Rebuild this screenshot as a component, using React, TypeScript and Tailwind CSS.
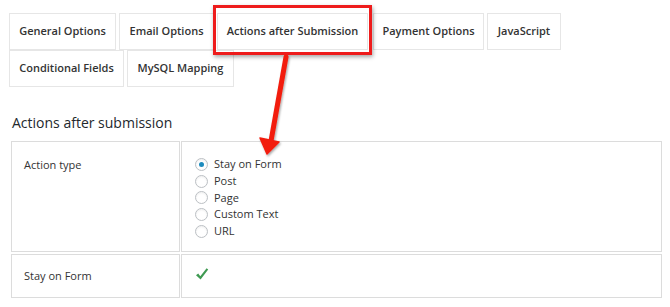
const tabsRow1 = [
  { label: 'General Options', w: 'w-[107px]' },
  { label: 'Email Options', w: 'w-[95px]' },
];

const radios = ['Stay on Form', 'Post', 'Page', 'Custom Text', 'URL'];

function Tab({ label, className = '' }: { label: string; className?: string }) {
  return (
    <div
      className={`h-[37px] flex items-center justify-center border border-[#e6e6e6] bg-white text-[11px] font-semibold text-[#333] ${className}`}
    >
      {label}
    </div>
  );
}

function Radio({ checked }: { checked?: boolean }) {
  return (
    <span className="w-[13px] h-[13px] rounded-full border border-[#bcc0c4] bg-white flex items-center justify-center shadow-[inset_0_1px_2px_rgba(0,0,0,0.07)]">
      {checked && <span className="w-[5px] h-[5px] rounded-full bg-[#1e8cbe]" />}
    </span>
  );
}

export default function App() {
  return (
    <div className="relative w-[670px] h-[307px] bg-white overflow-hidden font-['Open_Sans',sans-serif] text-[#333]">
      {/* Tabs */}
      <div className="pt-[13px] pl-[9px] w-[661px] flex flex-wrap">
        {tabsRow1.map((t) => (
          <Tab key={t.label} label={t.label} className={`${t.w} mr-[3px]`} />
        ))}
        <Tab label="Actions after Submission" className="w-[151px] mr-[5px] border-[#b3c9d6]" />
        <Tab label="Payment Options" className="w-[111px] mr-[3px]" />
        <Tab label="JavaScript" className="w-[74px]" />
        <div className="w-full flex">
          <Tab label="Conditional Fields" className="w-[115px] mr-[3px]" />
          <Tab label="MySQL Mapping" className="w-[107px]" />
        </div>
      </div>

      {/* Section heading */}
      <h2 className="mt-[26px] ml-[12px] text-[14px] leading-[20px] font-normal text-[#23282d]">
        Actions after submission
      </h2>

      {/* Settings table */}
      <div className="mt-[8px] ml-[11px] grid grid-cols-[169px_481px] gap-x-[1px] gap-y-[2px] text-[11px]">
        <div className="h-[111px] border border-[#dcdcdc] pl-[12px] pt-[14px] leading-[17px]">Action type</div>
        <div className="h-[111px] border border-[#dcdcdc] pl-[13px] pt-[14px]">
          {radios.map((r, i) => (
            <div key={r} className="flex items-center gap-[6px] h-[16.8px] leading-[16.8px]">
              <Radio checked={i === 0} />
              <span>{r}</span>
            </div>
          ))}
        </div>
        <div className="h-[44px] border border-[#dcdcdc] pl-[12px] flex items-center">Stay on Form</div>
        <div className="h-[44px] border border-[#dcdcdc] pl-[13px] pt-[12px]">
          <svg width="14" height="14" viewBox="0 0 14 14">
            <path d="M1 8.2 L3.2 6.6 L5.3 9.2 L11.6 1.2 L13.2 2.6 L5.6 12.6 Z" fill="#3f9a52" />
          </svg>
        </div>
      </div>

      {/* Annotation: red highlight box */}
      <div className="absolute left-[213px] top-[5px] w-[159px] h-[50px] border-[3px] border-[#ee1c1c] shadow-[1px_2px_4px_rgba(0,0,0,0.35)]" />

      {/* Annotation: red arrow */}
      <svg className="absolute left-0 top-0" width="670" height="307" viewBox="0 0 670 307">
        <defs>
          <filter id="sh" x="-50%" y="-50%" width="200%" height="200%">
            <feDropShadow dx="1" dy="1.5" stdDeviation="1.2" floodColor="#000" floodOpacity="0.35" />
          </filter>
        </defs>
        <g filter="url(#sh)">
          <line x1="286" y1="57" x2="271" y2="141" stroke="#f21d0f" strokeWidth="5" strokeLinecap="round" />
          <polygon points="260,138 279,142 267,154" fill="#f21d0f" stroke="#f21d0f" strokeWidth="1.5" strokeLinejoin="round" />
        </g>
      </svg>
    </div>
  );
}
